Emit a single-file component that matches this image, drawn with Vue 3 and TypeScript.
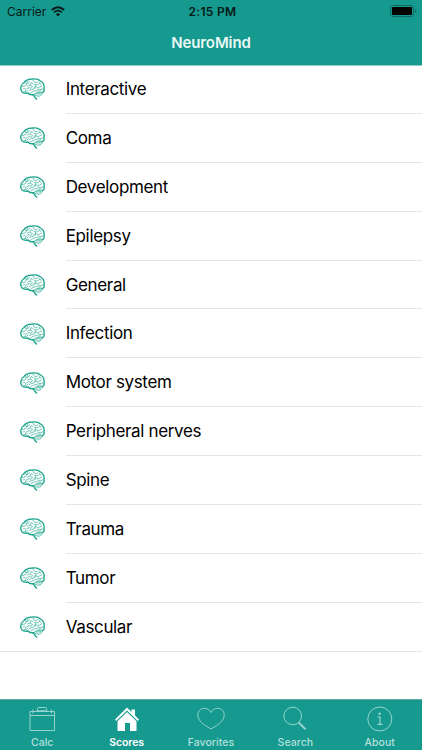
<script setup lang="ts">
interface Tab {
  id: string
  label: string
}

const categories: string[] = [
  'Interactive', 'Coma', 'Development', 'Epilepsy', 'General', 'Infection',
  'Motor system', 'Peripheral nerves', 'Spine', 'Trauma', 'Tumor', 'Vascular',
]

const tabs: Tab[] = [
  { id: 'calc', label: 'Calc' },
  { id: 'scores', label: 'Scores' },
  { id: 'favorites', label: 'Favorites' },
  { id: 'search', label: 'Search' },
  { id: 'about', label: 'About' },
]

const activeTab = 'scores'
</script>

<template>
  <div class="screen">
    <header class="header">
      <div class="status">
        <div class="carrier">
          <span>Carrier</span>
          <svg class="wifi" viewBox="0 0 14 11" width="14" height="11">
            <path d="M.8 4Q7-1.7 13.2 4" fill="none" stroke="#071917" stroke-width="1.9" />
            <path d="M3.1 6.4Q7 2.9 10.9 6.4" fill="none" stroke="#071917" stroke-width="1.7" />
            <path d="M4.9 8.2Q7 6.4 9.1 8.2L7 10.4Z" fill="#071917" />
          </svg>
        </div>
        <span class="time">2:15 PM</span>
        <svg class="battery" viewBox="0 0 27 12" width="27" height="12">
          <rect x=".5" y=".5" width="23" height="11" rx="2.5" fill="none" stroke="#0c6b64" />
          <rect x="2" y="2" width="20" height="8" rx="1" fill="#000" />
          <path d="M25 4q1.5.5 1.5 2T25 8z" fill="#0c6b64" />
        </svg>
      </div>
      <h1 class="title">NeuroMind</h1>
    </header>

    <ul class="list">
      <li v-for="name in categories" :key="name" class="row">
        <svg class="brain" viewBox="0 0 50 44" width="25" height="22">
          <g fill="none" stroke-linecap="round" stroke-linejoin="round">
            <path stroke="#4fbaa5" stroke-width="1.6" d="M6 22C9 19 12 21 11 25M5 17L10 16L13 12M10 10L16 11L19 7M15 16L20 14L22 9L26 11M13 22L18 19L22 21L25 17L21 15M19 25L23 23L28 22L29 18M26 4L28 8L32 10L36 7M29 13L34 14L39 11M33 18L37 19L43 16M35 22L40 23L46 22M39 9L42 13M36 26L42 26M8 27L13 27L16 24M15 7L14 10M31 15L31 20M22 29L28 26L34 25" />
            <path stroke="#4fbaa5" stroke-width="2" d="M29 32C33 28 39 28 45 29C44 36 38 38 31 35M32 32L42 31.5" />
            <path stroke="#22a68f" stroke-width="2.8" d="M28 33C23 34 18 33 16 30C10 31 3 30 2.5 25C0 20 3 12 8 9C12 4 19 2 25 2C32 1 38 3 41 6C46 9 49 15 48 21C49 25 48 28 45 29" />
            <path stroke="#22a68f" stroke-width="3" d="M26 34Q29 36 30 39L33 42" />
          </g>
        </svg>
        <span class="name">{{ name }}</span>
      </li>
    </ul>

    <nav class="tabs">
      <div v-for="tab in tabs" :key="tab.id" class="tab" :class="{ active: tab.id === activeTab }">
        <svg v-if="tab.id === 'calc'" class="icon" viewBox="0 0 28 28" width="28" height="28">
          <g fill="none" stroke="currentColor">
            <path d="M2 5.5H26.5V24.5H2ZM2 9.5H26.5M9.5 4.5V2.5Q9.5 1.5 10.5 1.5H17.5Q18.5 1.5 18.5 2.5V4.5" />
            <path d="M5 3.5V7.5M23.5 3.5V7.5M8.5 4.8H19.5" />
          </g>
        </svg>
        <svg v-else-if="tab.id === 'scores'" class="icon" viewBox="0 0 28 28" width="28" height="28">
          <path d="M14 1.5L18.5 6V3.5H22V9.5L26 13.6L24.8 15L14 4.5L3.2 15L2 13.6Z" fill="currentColor" />
          <path d="M14 6L23.5 15.2V25H17V17H12V25H4.5V15.2Z" fill="currentColor" />
        </svg>
        <svg v-else-if="tab.id === 'favorites'" class="icon" viewBox="0 0 28 28" width="28" height="28">
          <path d="M14 6.5C12.5 3.5 10 2.3 7.3 2.3C3.5 2.3.8 5.2.8 9C.8 14.5 6 18.5 14 22.9C22 18.5 27.2 14.5 27.2 9C27.2 5.2 24.5 2.3 20.7 2.3C18 2.3 15.5 3.5 14 6.5Z" fill="none" stroke="currentColor" />
        </svg>
        <svg v-else-if="tab.id === 'search'" class="icon" viewBox="0 0 28 28" width="28" height="28">
          <circle cx="11.7" cy="10" r="8.8" fill="none" stroke="currentColor" />
          <path d="M17.8 16.8L24.5 23.3" stroke="currentColor" stroke-width="2" />
        </svg>
        <svg v-else class="icon" viewBox="0 0 28 28" width="28" height="28">
          <circle cx="13.8" cy="13" r="12" fill="none" stroke="currentColor" />
          <circle cx="13.6" cy="7.8" r="1.3" fill="currentColor" />
          <path d="M11.5 11H14V18M11.5 18.3H16.5" fill="none" stroke="currentColor" stroke-width="1.2" />
        </svg>
        <span class="label">{{ tab.label }}</span>
      </div>
    </nav>
  </div>
</template>

<style>
body {
  margin: 0;
}
</style>

<style scoped>
.screen {
  display: flex;
  flex-direction: column;
  width: 422px;
  height: 750px;
  overflow: hidden;
  background: #fff;
  font-family: Inter, "Liberation Sans", sans-serif;
}

.header {
  box-sizing: border-box;
  height: 66px;
  flex: none;
  background: #16998f;
  border-bottom: 1px solid #8ccac5;
}

.status {
  display: grid;
  grid-template-columns: 1fr auto 1fr;
  align-items: center;
  height: 22px;
  padding: 0 5px 0 7px;
  color: #071917;
  font-size: 12px;
}

.carrier {
  display: flex;
  align-items: center;
  gap: 5px;
}

.time {
  padding-left: 1px;
  font-weight: 600;
  letter-spacing: 0.3px;
}

.battery {
  justify-self: end;
}

.title {
  margin: 0;
  height: 43px;
  line-height: 42px;
  text-align: center;
  color: #e9f8f5;
  font-size: 15px;
  font-weight: 600;
  letter-spacing: -0.1px;
}

.list {
  flex: 1;
  margin: -1px 0 0;
  padding: 0;
  list-style: none;
}

.row {
  display: flex;
  align-items: center;
  height: 48.88px;
  padding-left: 20px;
}

.brain {
  flex: none;
  margin-right: 20.7px;
}

.name {
  box-sizing: border-box;
  flex: 1;
  height: 100%;
  line-height: 48.4px;
  border-bottom: 1px solid #e4e4e6;
  color: #000;
  font-size: 17px;
  letter-spacing: -0.35px;
}

.row:last-child {
  box-sizing: border-box;
  border-bottom: 1px solid #e4e4e6;
}

.row:last-child .name {
  border-bottom: 0;
}

.tabs {
  box-sizing: border-box;
  display: grid;
  grid-template-columns: repeat(5, 1fr);
  height: 51px;
  flex: none;
  background: #16998f;
  border-top: 1px solid #64aaa3;
}

.tab {
  display: flex;
  flex-direction: column;
  align-items: center;
  padding-top: 6px;
  color: #94d4cd;
}

.icon {
  flex: none;
}

.label {
  margin-top: 2px;
  line-height: 13px;
  color: #b2e0db;
  font-size: 10.5px;
  font-weight: 500;
  letter-spacing: 0.05px;
}

.active {
  color: #fff;
}

.active .label {
  color: #fff;
  font-weight: 600;
  letter-spacing: -0.1px;
}
</style>
